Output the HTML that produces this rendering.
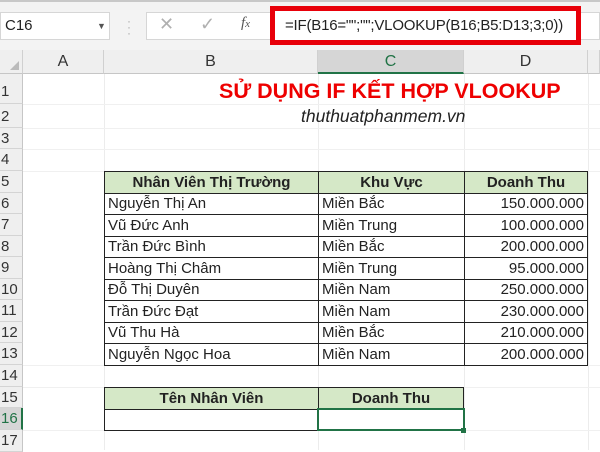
<!DOCTYPE html>
<html><head><meta charset="utf-8"><style>
*{margin:0;padding:0;box-sizing:border-box}
body{width:600px;height:450px;overflow:hidden;background:#fff;font-family:"Liberation Sans",Arial,sans-serif;position:relative}
.a{position:absolute}
.top{left:0;top:0;width:600px;height:50px;background:#f3f3f3;border-top:2px solid #c8c8c8}
.hdr{top:50px;height:24px;background:#efefef;border-bottom:1px solid #c6c6c6;border-right:1px solid #d0d0d0;font-size:16px;color:#333;text-align:center;line-height:24px}
.rh{left:0;width:23px;background:#efefef;border-right:1px solid #c6c6c6;border-bottom:1px solid #d4d4d4;font-size:15px;color:#333;line-height:21px;padding-left:1px}
.vl{top:74px;width:1px;height:376px;background:#ececec}
.hl{left:23px;width:577px;height:1px;background:#f0f0f0}
table{position:absolute;border-collapse:collapse;font-size:15px}
td{border:1.5px solid #222;height:21.5px;padding:0 3px;white-space:nowrap;color:#222}
.g td{background:#d5e8c7;font-weight:bold;text-align:center}
.r{text-align:right}
</style></head><body>
<div class="a top"></div>
<div class="a" style="left:0;top:12px;width:110px;height:28px;background:#fff;border:1px solid #d6d6d6;font-size:15px;line-height:26px;padding-left:4px;color:#222">C16<span style="position:absolute;left:96px;top:0;font-size:9px;color:#555">▼</span></div>
<div class="a" style="left:127px;top:18px;color:#aaa;font-size:12px;line-height:6px">·<br>·<br>·</div>
<div class="a" style="left:146px;top:12px;width:454px;height:28px;background:#fff;border:1px solid #d6d6d6"></div>
<div class="a" style="left:159px;top:14px;font-size:18px;color:#b0b0b0">✕</div>
<div class="a" style="left:200px;top:14px;font-size:18px;color:#b0b0b0">✓</div>
<div class="a" style="left:241px;top:15px;font-size:15px;color:#555;font-family:'Liberation Serif',serif;font-style:italic">f<span style="font-size:11px">x</span></div>
<div class="a" style="left:270px;top:6px;width:311px;height:39px;border:5px solid #e8000a;background:#fff;font-size:15px;line-height:29px;padding-left:10px;color:#222;letter-spacing:-0.2px">=IF(B16="";"";VLOOKUP(B16;B5:D13;3;0))</div>

<div class="a hdr" style="left:0;width:23px"><span style="position:absolute;right:3px;bottom:3px;width:0;height:0;border-left:9px solid transparent;border-bottom:9px solid #bbb"></span></div>
<div class="a hdr" style="left:23px;width:81px">A</div>
<div class="a hdr" style="left:104px;width:214px">B</div>
<div class="a hdr" style="left:318px;width:146px;background:#d6d6d6;color:#217346;border-bottom:2px solid #217346">C</div>
<div class="a hdr" style="left:464px;width:124px">D</div>
<div class="a hdr" style="left:588px;width:12px"></div>

<div class="a vl" style="left:104px"></div><div class="a vl" style="left:318px"></div><div class="a vl" style="left:464px"></div><div class="a vl" style="left:588px"></div>
<div class="a hl" style="top:104px"></div><div class="a hl" style="top:128px"></div><div class="a hl" style="top:149px"></div><div class="a hl" style="top:171px"></div><div class="a hl" style="top:365px"></div><div class="a hl" style="top:387px"></div><div class="a hl" style="top:430px"></div>

<div class="a rh" style="top:74px;height:30px;line-height:36px">1</div>
<div class="a rh" style="top:104px;height:24px;line-height:26px">2</div>
<div class="a rh" style="top:128px;height:21px">3</div>
<div class="a rh" style="top:149px;height:22px">4</div>
<div class="a rh" style="top:171px;height:22px">5</div>
<div class="a rh" style="top:193px;height:21px">6</div>
<div class="a rh" style="top:214px;height:22px">7</div>
<div class="a rh" style="top:236px;height:21px">8</div>
<div class="a rh" style="top:257px;height:22px">9</div>
<div class="a rh" style="top:279px;height:21px">10</div>
<div class="a rh" style="top:300px;height:22px">11</div>
<div class="a rh" style="top:322px;height:21px">12</div>
<div class="a rh" style="top:343px;height:22px">13</div>
<div class="a rh" style="top:365px;height:22px">14</div>
<div class="a rh" style="top:387px;height:21px">15</div>
<div class="a rh" style="top:408px;height:22px;background:#d6d6d6;color:#217346;border-right:2px solid #217346">16</div>
<div class="a rh" style="top:430px;height:22px">17</div>

<div class="a" style="left:219px;top:79px;font-size:21.5px;font-weight:bold;color:#ee0000">SỬ DỤNG IF KẾT HỢP VLOOKUP</div>
<div class="a" style="left:301px;top:106px;font-size:17.5px;font-style:italic;color:#222">thuthuatphanmem.vn</div>

<table style="left:104px;top:171px;width:484px">
<tr class="g"><td style="width:214px">Nhân Viên Thị Trường</td><td style="width:146px">Khu Vực</td><td>Doanh Thu</td></tr>
<tr><td>Nguyễn Thị An</td><td>Miền Bắc</td><td class="r">150.000.000</td></tr>
<tr><td>Vũ Đức Anh</td><td>Miền Trung</td><td class="r">100.000.000</td></tr>
<tr><td>Trần Đức Bình</td><td>Miền Bắc</td><td class="r">200.000.000</td></tr>
<tr><td>Hoàng Thị Châm</td><td>Miền Trung</td><td class="r">95.000.000</td></tr>
<tr><td>Đỗ Thị Duyên</td><td>Miền Nam</td><td class="r">250.000.000</td></tr>
<tr><td>Trần Đức Đạt</td><td>Miền Nam</td><td class="r">230.000.000</td></tr>
<tr><td>Vũ Thu Hà</td><td>Miền Bắc</td><td class="r">210.000.000</td></tr>
<tr><td>Nguyễn Ngọc Hoa</td><td>Miền Nam</td><td class="r">200.000.000</td></tr>
</table>
<table style="left:104px;top:387px;width:360px">
<tr class="g"><td style="width:214px">Tên Nhân Viên</td><td>Doanh Thu</td></tr>
<tr><td></td><td></td></tr>
</table>
<div class="a" style="left:317px;top:408px;width:148px;height:23px;border:2px solid #217346"></div>
<div class="a" style="left:461px;top:428px;width:5px;height:5px;background:#217346"></div>
</body></html>
